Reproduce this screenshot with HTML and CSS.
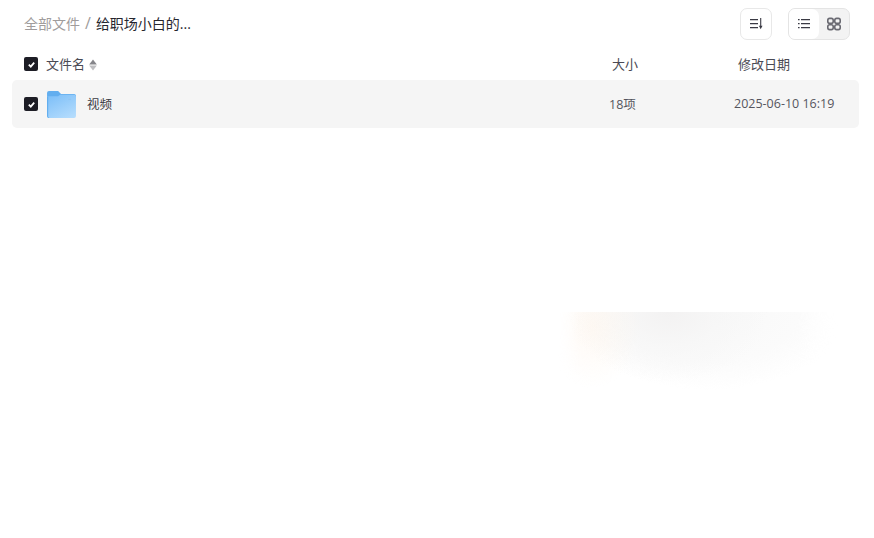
FILE: index.html
```html
<!DOCTYPE html>
<html lang="zh-CN">
<head>
    <meta charset="UTF-8">
    <meta name="viewport" content="width=device-width, initial-scale=1.0">
    <title>全部文件</title>
    <link rel="stylesheet" href="styles.css">
</head>
<body>
    <div class="page">
        <div class="toolbar">
            <div class="crumbs">
                <span class="crumb-root">全部文件</span>
                <span class="crumb-sep">/</span>
                <span class="crumb-current">给职场小白的...</span>
            </div>
            <div class="tools">
                <button class="sort-btn" type="button">
                    <svg width="16" height="16" viewBox="0 0 16 16" fill="none" stroke="#3a3a44" stroke-width="1.3">
                        <path d="M2 3.6h8M2 7.6h8M2 11.6h8"/>
                        <path d="M12.7 2v9" stroke-width="1.1"/>
                        <path d="M10.9 9.8h3.6l-1.8 3.4z" fill="#3a3a44" stroke="none"/>
                    </svg>
                </button>
                <div class="view-switch">
                    <span class="view-item view-active">
                        <svg width="16" height="16" viewBox="0 0 16 16" fill="none" stroke="#3a3a44" stroke-width="1.2">
                            <path d="M2 3.6h1.6M2 7.6h1.6M2 11.6h1.6M5 3.6h9M5 7.6h9M5 11.6h9"/>
                        </svg>
                    </span>
                    <span class="view-item">
                        <svg width="16" height="16" viewBox="0 0 16 16" fill="none" stroke="#6a6a72" stroke-width="1.6">
                            <rect x="1.8" y="2.4" width="5.4" height="4.8" rx="1.8"/>
                            <rect x="8.8" y="2.4" width="5.4" height="4.8" rx="1.8"/>
                            <rect x="1.8" y="8.8" width="5.4" height="4.8" rx="1.8"/>
                            <rect x="8.8" y="8.8" width="5.4" height="4.8" rx="1.8"/>
                        </svg>
                    </span>
                </div>
            </div>
        </div>

        <div class="table-head">
            <div class="col-name">
                <span class="check">
                    <svg width="9" height="9" viewBox="0 0 10 10" fill="none" stroke="#fff" stroke-width="2"><path d="M2 5.2l2.2 2.2L8 3"/></svg>
                </span>
                <span class="head-label">文件名</span>
                <svg class="sort-mark" width="8" height="12" viewBox="0 0 8 12">
                    <path d="M4 .6L7.8 5.5H.2z" fill="#85858a"/>
                    <path d="M4 11.4L.2 6.5h7.6z" fill="#bdbdc0"/>
                </svg>
            </div>
            <div class="col-size head-size">大小</div>
            <div class="col-date head-date">修改日期</div>
        </div>

        <div class="file-row">
            <div class="col-name">
                <span class="check">
                    <svg width="9" height="9" viewBox="0 0 10 10" fill="none" stroke="#fff" stroke-width="2"><path d="M2 5.2l2.2 2.2L8 3"/></svg>
                </span>
                <svg class="folder" width="29" height="27" viewBox="0 0 30 28">
                    <defs>
                        <linearGradient id="folderFront" x1="0.2" y1="0" x2="0.8" y2="1">
                            <stop offset="0" stop-color="#7fc0f8"/>
                            <stop offset="1" stop-color="#b4dcfd"/>
                        </linearGradient>
                    </defs>
                    <path d="M0 2a2 2 0 0 1 2-2h9.5l3 3H28a2 2 0 0 1 2 2v4H0z" fill="#62aeef"/>
                    <path d="M0 26V6.5a1 1 0 0 1 1-1h10.5l2-1.5H28a2 2 0 0 1 2 2v20a2 2 0 0 1-2 2H2a2 2 0 0 1-2-2z" fill="url(#folderFront)"/>
                    <path d="M0 26V6h1.2v20.5a1 1 0 0 0 1 1V28a2 2 0 0 1-2.2-2z" fill="#62aeef"/>
                    <rect x="22" y="8" width="3" height="1.2" rx=".6" fill="#8fc4f2"/>
                </svg>
                <span class="file-name">视频</span>
            </div>
            <div class="col-size row-size">18项</div>
            <div class="col-date row-date">2025-06-10 16:19</div>
        </div>
    </div>
    <div class="glow"></div>
</body>
</html>
```

FILE: styles.css
```css
* {
    box-sizing: border-box;
}
body {
    margin: 0;
    background-color: #fff;
    font-family: "Open Sans", "Noto Sans CJK SC", sans-serif;
    color: #3a3a44;
    overflow: hidden;
}
.page {
    padding: 8px 15px 0 12px;
}
.toolbar {
    display: flex;
    align-items: center;
    justify-content: space-between;
    height: 32px;
    margin-bottom: 8px;
    padding: 0 9px 0 12px;
}
.crumbs {
    display: flex;
    align-items: center;
    font-size: 14px;
    padding-bottom: 3px;
}
.crumb-root {
    color: #a09c9c;
}
.crumb-sep {
    margin: 0 6px 0 5px;
    color: #a09c9c;
    font-size: 16px;
}
.crumb-current {
    margin-left: -1px;
    color: #26262e;
}
.tools {
    display: flex;
    align-items: center;
    gap: 16px;
}
.sort-btn {
    display: flex;
    align-items: center;
    justify-content: center;
    width: 32px;
    height: 32px;
    padding: 0;
    background-color: #fff;
    border: 1px solid #e8e8e8;
    border-radius: 7px;
}
.view-switch {
    display: flex;
    width: 62px;
    height: 32px;
    background-color: #f3f3f3;
    border: 1px solid #e4e4e4;
    border-radius: 7px;
    overflow: hidden;
}
.view-item {
    display: flex;
    align-items: center;
    justify-content: center;
    width: 30px;
}
.view-active {
    background-color: #fff;
    border-radius: 0 7px 7px 0;
}
.table-head,
.file-row {
    display: flex;
    align-items: center;
    padding-left: 12px;
    font-size: 13px;
}
.table-head {
    height: 32px;
    color: #4a4a54;
}
.file-row {
    height: 48px;
    background-color: #f5f5f5;
    border-radius: 5px;
}
.col-name {
    display: flex;
    align-items: center;
    width: 585px;
}
.col-size {
    width: 125px;
}
.col-size,
.col-date,
.head-label,
.file-name {
    padding-bottom: 2px;
}
.check {
    display: flex;
    align-items: center;
    justify-content: center;
    width: 14px;
    height: 14px;
    background-color: #1d1d25;
    border-radius: 2px;
}
.head-label {
    margin-left: 8px;
}
.sort-mark {
    margin-left: 4px;
    margin-top: 1px;
}
.folder {
    margin-left: 9px;
}
.file-name {
    margin-left: 11px;
    font-size: 12.5px;
}
.head-size {
    padding-left: 3px;
}
.head-date {
    padding-left: 4px;
}
.row-size,
.row-date {
    font-size: 12.5px;
    color: #55555e;
}
.glow {
    position: absolute;
    left: 558px;
    top: 312px;
    width: 280px;
    height: 82px;
    background:
        radial-gradient(ellipse 48px 62px at 34px 14px, rgba(255, 245, 235, 0.55), rgba(255, 245, 235, 0) 100%),
        radial-gradient(ellipse 100px 70px at 110px 0, #f3f2f2 0%, rgba(246, 246, 246, 0.7) 50%, rgba(255, 255, 255, 0) 100%),
        radial-gradient(ellipse 140px 78px at 150px 0, #f8f8f8 0%, #fbfbfb 65%, rgba(255, 255, 255, 0) 100%);
    -webkit-mask-image: linear-gradient(to right, transparent, #000 20px, #000 240px, transparent);
    mask-image: linear-gradient(to right, transparent, #000 20px, #000 240px, transparent);
}
```
